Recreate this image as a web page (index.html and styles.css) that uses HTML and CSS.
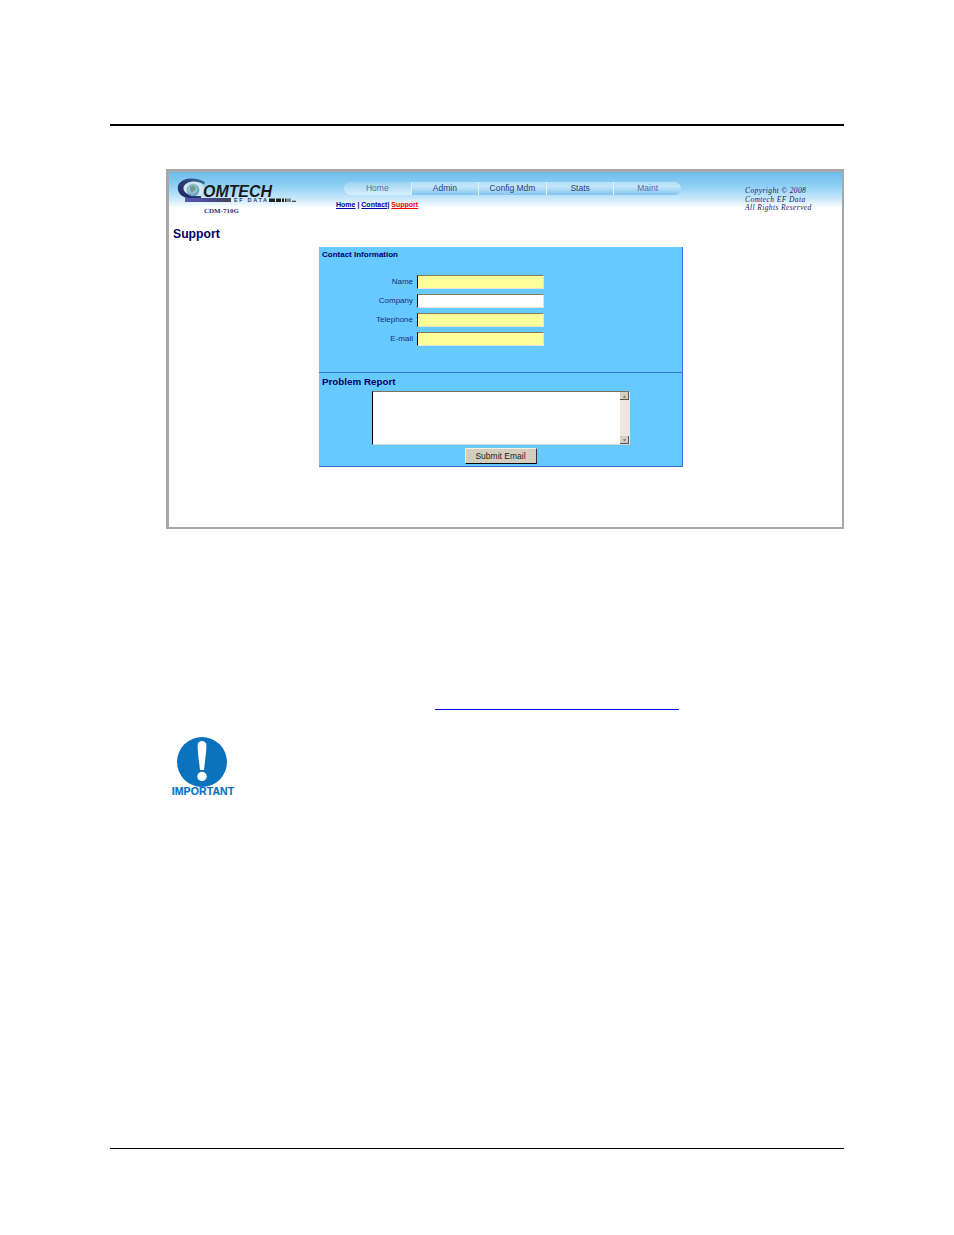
FILE: index.html
```html
<!DOCTYPE html>
<html lang="en">
<head>
<meta charset="utf-8">
<title>Support</title>
<link rel="stylesheet" href="styles.css">
</head>
<body>
<div class="page">
  <div class="rule-top"></div>
  <div class="shot">
    <div class="shot-head">
      <div class="brand">
        <svg class="logo" width="120" height="28" viewBox="0 0 120 28">
          <defs>
            <radialGradient id="globe" cx="45%" cy="40%" r="65%">
              <stop offset="0" stop-color="#d4eaf2"/>
              <stop offset="1" stop-color="#4d93b4"/>
            </radialGradient>
            <linearGradient id="ring" x1="0" y1="1" x2="1" y2="0">
              <stop offset="0" stop-color="#1c2660"/>
              <stop offset=".6" stop-color="#2c4078"/>
              <stop offset="1" stop-color="#3d7f9f"/>
            </linearGradient>
            <linearGradient id="bar" x1="0" y1="0" x2="1" y2="0">
              <stop offset="0" stop-color="#5a5ab0"/>
              <stop offset=".6" stop-color="#48488c"/>
              <stop offset="1" stop-color="#444"/>
            </linearGradient>
          </defs>
          <ellipse cx="16" cy="11" rx="11" ry="8" fill="#cfe6f2"/>
          <path d="M28 4C23 0.8 17 0 12 0.6C5 1.5 0.6 5.5 0.8 10.5C1 15.5 5.5 19.5 11 20H24V18C16 18.5 7.5 16.5 6.5 11C6 7 10 3.6 16 3.4C20 3.3 24 4.2 27 6.5Z" fill="url(#ring)"/>
          <circle cx="16" cy="12" r="6.3" fill="url(#globe)"/>
          <path d="M13 8.5l3-1.2 3 2-1 3-3 2.4-2-2.2z" fill="#6f9a8c"/>
          <rect x="8" y="20" width="46" height="4" fill="url(#bar)"/>
          <text x="26" y="19" class="logo-word" textLength="69" lengthAdjust="spacingAndGlyphs">OMTECH</text>
          <text x="57" y="24.2" class="logo-sub" textLength="33" lengthAdjust="spacing">EF DATA</text>
          <path d="M92 20.5h6v3.5h-6zM99 20.5h5v3.5h-5zM105 20.5h2v3.5h-2zM108 20.5h1.5v3.5h-1.5zM110.5 20.5h1v3.5h-1zM112.5 20.5h1v3.5h-1zM115 22.8h4v1h-4z" fill="#222"/>
        </svg>
        <div class="model">CDM-710G</div>
      </div>
      <div class="center">
        <nav class="tabs">
          <a class="tab tab-first tab-dim">Home</a>
          <a class="tab">Admin</a>
          <a class="tab">Config Mdm</a>
          <a class="tab">Stats</a>
          <a class="tab tab-last tab-dim">Maint</a>
        </nav>
        <div class="crumbs"><a class="crumb">Home</a> | <a class="crumb">Contact</a>| <a class="crumb crumb-on">Support</a></div>
      </div>
      <div class="copy">Copyright © 2008<br>Comtech EF Data<br>All Rights Reserved</div>
    </div>
    <h1 class="title">Support</h1>
    <div class="panel">
      <section class="sect sect-contact">
        <h2 class="sect-small">Contact Information</h2>
        <div class="fields">
          <label class="field"><span class="lab">Name</span><input class="inp inp-req" type="text"></label>
          <label class="field"><span class="lab">Company</span><input class="inp" type="text"></label>
          <label class="field"><span class="lab">Telephone</span><input class="inp inp-req" type="text"></label>
          <label class="field"><span class="lab">E-mail</span><input class="inp inp-req" type="text"></label>
        </div>
      </section>
      <section class="sect sect-report">
        <h2 class="sect-big">Problem Report</h2>
        <div class="area">
          <textarea class="area-text" aria-label="Problem report"></textarea>
          <div class="scroll">
            <span class="scroll-btn">▴</span>
            <span class="scroll-btn">▾</span>
          </div>
        </div>
        <div class="actions"><button class="submit" type="button">Submit Email</button></div>
      </section>
    </div>
  </div>
  <div class="link-line"></div>
  <div class="note">
    <svg class="note-icon" width="50" height="50" viewBox="0 0 50 50">
      <circle cx="25" cy="25" r="25" fill="#0b72bd"/>
      <path d="M20.6 8.5C20.6 5.6 22.5 4 25 4S29.4 5.6 29.4 8.5C29.4 15 27.6 27 27 33H23C22.4 27 20.6 15 20.6 8.5Z" fill="#fff"/>
      <circle cx="25" cy="39.5" r="4.7" fill="#fff"/>
    </svg>
    <div class="note-label">IMPORTANT</div>
  </div>
  <div class="rule-bottom"></div>
</div>
</body>
</html>
```
FILE: styles.css
```css
html, body { margin: 0; padding: 0; background: #fff; }
body { font-family: "Liberation Sans", Arial, sans-serif; }
.page { width: 954px; height: 1235px; padding-top: 124px; box-sizing: border-box; overflow: hidden; }
.rule-top { margin-left: 110px; width: 734px; height: 2px; background: #000; }
.rule-bottom { margin: 351px 0 0 110px; width: 734px; height: 1px; background: #000; }

.shot { margin: 43px 0 0 166px; width: 678px; height: 360px; box-sizing: border-box;
  border: 3px solid #a8a8a8; border-right-width: 2px; border-bottom-width: 2px; background: #fff; }
.shot-head { display: flex; height: 48px;
  background: linear-gradient(#6cbdec 0, #8fd0f4 14px, #c6e7fa 26px, #fff 36px); }
.brand { width: 167px; padding: 6px 0 0 8px; box-sizing: border-box; }
.logo { display: block; }
.logo-word { font: italic bold 17px "Liberation Sans", Arial, sans-serif; fill: #1a1a1a; }
.logo-sub { font: bold 5.5px "Liberation Sans", Arial, sans-serif; fill: #2c3a70; }
.model { margin: 1px 0 0 27px; font: bold 7px/9px "Liberation Serif", serif; color: #2c2c7c; }

.center { width: 409px; padding-top: 10px; box-sizing: border-box; }
.tabs { display: flex; margin-left: 8px; width: 337px; height: 13px; }
.tab { flex: 1; font-size: 8.5px; line-height: 13px; text-align: center; color: #2f3f7f;
  background: linear-gradient(#b4def7, #c4e6fa 35%, #82c4ee); border-left: 1px solid #dff1fc; }
.tab-first { border-left: 0; border-radius: 7px 0 0 7px; background: linear-gradient(#9ed4f3, #d8f0fd); }
.tab-last { border-radius: 0 7px 7px 0; }
.tab-dim { color: #5c6c9c; }
.crumbs { margin-top: 5px; font-size: 7px; line-height: 9px; font-weight: bold; color: #000080; }
.crumb { color: #0000a0; text-decoration: underline; }
.crumb-on { color: #ee0000; }
.copy { padding-top: 15px; font: italic 7.5px/8.5px "Liberation Serif", serif; color: #1c1c6c; letter-spacing: .4px; }

.title { margin: 7px 0 0 4px; font-size: 12.2px; line-height: 14px; font-weight: bold; color: #000066; }

.panel { margin: 6px 0 0 150px; width: 364px; }
.sect { box-sizing: border-box; background: #66c9ff; border-right: 1px solid #3a6fd8; border-bottom: 1px solid #3a6fd8; }
.sect-contact { height: 126px; padding: 3px 0 0 3px; }
.sect-report { height: 94px; padding: 2px 0 0 3px; }
.sect-small { margin: 0; font-size: 8px; line-height: 10px; font-weight: bold; color: #000066; }
.sect-big { margin: 0; font-size: 9.8px; line-height: 13px; font-weight: bold; color: #000066; }

.fields { display: flex; flex-direction: column; gap: 6px; margin-top: 15px; }
.field { display: flex; align-items: center; height: 13px; }
.lab { width: 91px; text-align: right; font-size: 8px; color: #1c2c7c; }
.inp { margin: 0 0 0 4px; padding: 0; width: 127px; height: 14px; box-sizing: border-box; background: #fff;
  border-style: solid; border-width: 1px; border-color: #8a7a5c #e4e2dc #e4e2dc #000; }
.inp-req { background: #ffff99; }

.area { display: flex; margin: 3px 0 0 50px; width: 258px; height: 54px; box-sizing: border-box;
  border-style: solid; border-width: 1px; border-color: #7a7260 #e8e6e0 #d8d6d0 #000; background: #fff; }
.area-text { flex: 1; margin: 0; padding: 0; border: 0; resize: none; outline: 0; background: #fff; overflow: hidden; }
.scroll { display: flex; flex-direction: column; justify-content: space-between; width: 9px; background: #ebe8df; }
.scroll-btn { height: 8px; font-size: 6px; line-height: 8px; text-align: center; color: #8a8478;
  background: #d4d0c8; border-right: 1px solid #555; border-bottom: 1px solid #555; box-sizing: border-box; }

.actions { display: flex; justify-content: center; margin: 3px 0 0 0; padding-right: 3px; }
.submit { width: 72px; height: 16px; margin: 0; padding: 0; box-sizing: border-box; font: 8.5px "Liberation Sans", Arial, sans-serif; color: #222;
  background: #d4cdbd; border-style: solid; border-width: 1px; border-color: #f4f0e8 #333 #000 #f4f0e8; }

.link-line { margin: 180px 0 0 435px; width: 244px; height: 1px; background: #0000ff; }
.note { margin: 27px 0 0 170px; width: 66px; }
.note-icon { display: block; margin-left: 7px; }
.note-label { margin-top: -1px; font-size: 10.5px; line-height: 11px; font-weight: bold; color: #0b72bd; text-align: center; white-space: nowrap; -webkit-text-stroke: .2px #0b72bd; letter-spacing: .1px; }
```
